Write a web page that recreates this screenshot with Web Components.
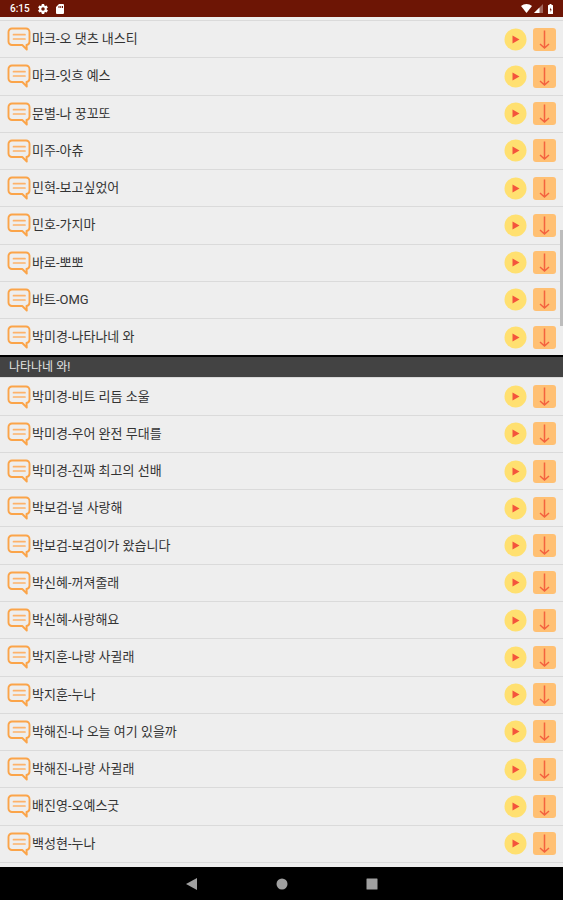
<!DOCTYPE html>
<html lang="ko">
<head>
<meta charset="utf-8">
<meta name="viewport" content="width=device-width, initial-scale=1">
<title>Voice list</title>
<style>
  body {
    margin: 0;
    background: #000;
    font-family: Roboto, "Noto Sans CJK KR", sans-serif;
  }
</style>
</head>
<body>
<voice-app></voice-app>

<script>
class StatusBar extends HTMLElement {
  constructor() {
    super();
    this.attachShadow({ mode: 'open' });
  }

  connectedCallback() {
    this.shadowRoot.innerHTML = `
      <style>
        :host {
          display: flex;
          align-items: center;
          justify-content: space-between;
          height: 17px;
          padding: 0 8px 0 10px;
          background: #6d1505;
          color: #fff;
          font-size: 10px;
          font-weight: 500;
          line-height: 17px;
        }

        .side {
          display: flex;
          align-items: center;
        }

        .left {
          gap: 8px;
        }

        .right {
          gap: 2px;
        }

        svg {
          display: block;
          fill: #fff;
        }
      </style>

      <div class="side left">
        <span><slot></slot></span>
        <svg width="10" height="10" viewBox="2 2 20 20"><path d="M19.400 13a7.500 7.500 0 0 0 0-2l2.100-1.600a.5.5 0 0 0 .1-.6l-2-3.500a.5.5 0 0 0-.6-.2l-2.500 1a7.300 7.300 0 0 0-1.700-1L14.400 2.400a.5.5 0 0 0-.5-.4h-4a.5.5 0 0 0-.5.4L9.100 5.100a7.700 7.700 0 0 0-1.700 1l-2.500-1a.5.5 0 0 0-.6.2l-2 3.500a.5.5 0 0 0 .1.6L4.500 11a7.900 7.900 0 0 0 0 2l-2.100 1.600a.5.5 0 0 0-.1.6l2 3.500c.1.2.4.3.6.2l2.500-1c.5.4 1.100.7 1.700 1l.4 2.700c0 .2.2.4.5.4h4c.3 0 .5-.2.5-.4l.4-2.700a7.300 7.300 0 0 0 1.700-1l2.500 1c.2.1.5 0 .6-.2l2-3.500a.5.5 0 0 0-.1-.6zM12 15.500a3.500 3.500 0 1 1 0-7 3.500 3.500 0 0 1 0 7z"/></svg>
        <svg width="8" height="10" viewBox="0 0 16 20"><path fill-rule="evenodd" d="M6 0 0 6v12a2 2 0 0 0 2 2h12a2 2 0 0 0 2-2V2a2 2 0 0 0-2-2zM5 4h2v4H5zm3.500 0h2v4h-2zM12 4h2v4h-2z"/></svg>
      </div>
      <div class="side right">
        <svg width="11" height="9" viewBox="0 0 22 18"><path d="M11 18 0 4C3 1.500 7 0 11 0s8 1.500 11 4z"/></svg>
        <svg width="9" height="9" viewBox="0 0 18 18"><path d="M18 0v18H0z" opacity=".35"/><path d="M11 7v11H0z"/></svg>
        <svg width="10" height="10" viewBox="8 0 20 20"><path fill-rule="evenodd" d="M15 2h2V0h4v2h2a1 1 0 0 1 1 1v16a1 1 0 0 1-1 1h-8a1 1 0 0 1-1-1V3a1 1 0 0 1 1-1zm5 5-2.500 5h1.500v4l2.500-5H20z"/></svg>
      </div>
    `;
  }
}

class VoiceRow extends HTMLElement {
  constructor() {
    super();
    this.attachShadow({ mode: 'open' });
  }

  connectedCallback() {
    const name = this.textContent;

    this.shadowRoot.innerHTML = `
      <style>
        :host {
          display: flex;
          align-items: center;
          flex: 1 0 37px;
          gap: 6px;
          box-sizing: border-box;
          padding: 0 7px;
          border-top: 1px solid #dadada;
          color: #333;
          font-size: 13px;
          line-height: 20px;
        }

        button {
          display: flex;
          align-items: center;
          flex: none;
          margin: 0;
          padding: 0;
          border: 0;
          background: none;
          color: inherit;
          font: inherit;
          text-align: left;
          cursor: pointer;
        }

        .title {
          flex: 1;
          gap: 1px;
          min-width: 0;
        }

        svg {
          display: block;
          flex: none;
        }
      </style>

      <button class="title">
        <svg width="24" height="24" viewBox="0 0 24 24" fill="none" stroke-linejoin="round" stroke-linecap="round">
          <path d="M5 1.500h14a3.500 3.500 0 0 1 3.500 3.500v9.500a3.500 3.500 0 0 1-3 3.500l.3 4.500-4.500-4.500H5a3.500 3.500 0 0 1-3.500-3.500V5A3.500 3.500 0 0 1 5 1.500z" stroke="#fba449" stroke-width="1.900"/>
          <path d="M6.500 7.700h11.500M6.500 12h11.500" stroke="#fdb26a" stroke-width="1.700"/>
        </svg>
        <span><slot></slot></span>
      </button>
      <button aria-label="${name} 재생">
        <svg width="23" height="23" viewBox="0 0 23 23"><circle cx="11.500" cy="11.500" r="11" fill="#ffe070"/><path d="M8.500 7.500v8l7-4z" fill="#f4543c"/></svg>
      </button>
      <button aria-label="${name} 다운로드">
        <svg width="23" height="23" viewBox="0 0 23 23"><rect width="23" height="23" rx="3" fill="#ffc073"/><path d="M11.500 2.500v17M7 16l4.500 4 4.500-4" fill="none" stroke="#f4623f" stroke-width="1.500"/></svg>
      </button>
    `;
  }
}

class VoiceText extends HTMLElement {
  constructor() {
    super();
    this.attachShadow({ mode: 'open' });
  }

  connectedCallback() {
    this.shadowRoot.innerHTML = `
      <style>
        :host {
          display: block;
          flex: none;
          padding: 0 9px;
          border-top: 2px solid #000;
          background: #434343;
          color: #e4e4e4;
          font-size: 12px;
          line-height: 20px;
        }
      </style>
      <slot></slot>
    `;
  }
}

class NavBar extends HTMLElement {
  constructor() {
    super();
    this.attachShadow({ mode: 'open' });
  }

  connectedCallback() {
    this.shadowRoot.innerHTML = `
      <style>
        :host {
          display: flex;
          justify-content: center;
          background: #000;
        }

        button {
          display: flex;
          align-items: center;
          justify-content: center;
          width: 90px;
          height: 33px;
          padding: 0;
          border: 0;
          background: none;
          cursor: pointer;
        }

        svg {
          fill: #a0a0a0;
        }
      </style>

      <button aria-label="뒤로"><svg width="12" height="12" viewBox="0 0 12 12"><path d="M11 0v12L0 6z"/></svg></button>
      <button aria-label="홈"><svg width="12" height="12" viewBox="0 0 12 12"><circle cx="6" cy="6" r="5.500"/></svg></button>
      <button aria-label="최근 앱"><svg width="12" height="12" viewBox="0 0 12 12"><rect x=".5" y=".5" width="11" height="11" rx=".5"/></svg></button>
    `;
  }
}

class VoiceApp extends HTMLElement {
  constructor() {
    super();
    this.attachShadow({ mode: 'open' });
    this.openName = '박미경-나타나네 와';
    this.items = [
      '마크-오 댓츠 내스티',
      '마크-잇흐 예스',
      '문별-나 꿍꼬또',
      '미주-아츄',
      '민혁-보고싶었어',
      '민호-가지마',
      '바로-뽀뽀',
      '바트-OMG',
      '박미경-나타나네 와',
      '박미경-비트 리듬 소울',
      '박미경-우어 완전 무대를',
      '박미경-진짜 최고의 선배',
      '박보검-널 사랑해',
      '박보검-보검이가 왔습니다',
      '박신혜-꺼져줄래',
      '박신혜-사랑해요',
      '박지훈-나랑 사귈래',
      '박지훈-누나',
      '박해진-나 오늘 여기 있을까',
      '박해진-나랑 사귈래',
      '배진영-오예스굿',
      '백성현-누나'
    ];
  }

  connectedCallback() {
    this.shadowRoot.innerHTML = `
      <style>
        :host {
          display: flex;
          flex-direction: column;
          min-height: 100vh;
        }

        main {
          position: relative;
          display: flex;
          flex: 1;
          flex-direction: column;
          box-sizing: border-box;
          padding: 3px 0 0;
          background: #eee;
        }

        .end {
          flex: none;
          height: 4px;
          border-top: 1px solid #dadada;
        }

        .scrollbar {
          position: absolute;
          top: 25%;
          right: 0;
          width: 3px;
          height: 96px;
          background: #bdbdbd;
        }
      </style>

      <status-bar>6:15</status-bar>
      <main>
        ${this.items.map(item => `
          <voice-row>${item}</voice-row>
          ${item === this.openName ? '<voice-text>나타나네 와!</voice-text>' : ''}
        `).join('')}
        <div class="end"></div>
        <div class="scrollbar"></div>
      </main>
      <nav-bar></nav-bar>
    `;
  }
}

customElements.define('status-bar', StatusBar);
customElements.define('voice-row', VoiceRow);
customElements.define('voice-text', VoiceText);
customElements.define('nav-bar', NavBar);
customElements.define('voice-app', VoiceApp);
</script>
</body>
</html>
